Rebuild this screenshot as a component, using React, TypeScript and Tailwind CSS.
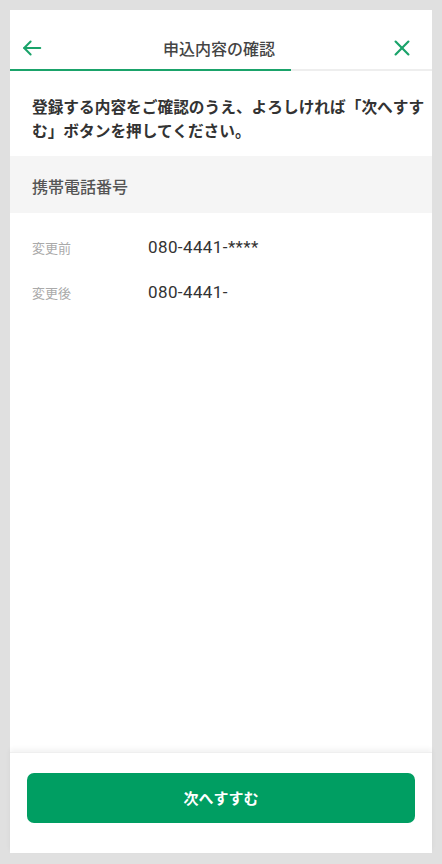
import React from "react";

export default function App() {
  const jp = { fontFamily: '"Noto Sans CJK JP", "Noto Sans", sans-serif' };
  return (
    <div className="w-[442px] h-[864px] bg-[#e0e0e0] pt-[10px] px-[10px] pb-[11px]" style={jp}>
      <div className="w-[422px] h-[843px] bg-white flex flex-col">
        {/* header */}
        <div className="h-[59px] pt-[16px] flex items-center justify-between pl-[11px] pr-[19px]">
          <svg width="22" height="22" viewBox="0 0 24 24" fill="none" stroke="#1aa36a" strokeWidth="2.2" strokeLinecap="round" strokeLinejoin="round">
            <path d="M21 12H3.5" />
            <path d="M10.5 5l-7 7 7 7" />
          </svg>
          <div className="text-[16px] font-medium text-[#444] leading-none pl-[4px]">申込内容の確認</div>
          <svg width="22" height="22" viewBox="0 0 24 24" fill="none" stroke="#1aa36a" strokeWidth="2.4" strokeLinecap="round">
            <path d="M5 5l14 14" />
            <path d="M19 5L5 19" />
          </svg>
        </div>
        <div className="h-[2px] bg-[#eeeeee] flex">
          <div className="w-[281px] h-[2px] bg-[#1aa36a]" />
        </div>
        {/* message */}
        <div className="pl-[22px] pr-[6px] pt-[24px] pb-[13px]">
          <p className="text-[15.7px] font-bold text-[#333] leading-[24px]">
            登録する内容をご確認のうえ、よろしければ「次へすすむ」ボタンを押してください。
          </p>
        </div>
        {/* section */}
        <div className="h-[57px] bg-[#f5f5f5] flex items-center px-[22px]">
          <span className="text-[16px] font-medium text-[#555] leading-none pt-[2px]">携帯電話番号</span>
        </div>
        <div className="pt-[12px] px-[22px]">
          <div className="h-[45px] flex items-center">
            <span className="w-[116px] text-[13px] text-[#aaa]">変更前</span>
            <span className="text-[17px] text-[#333] tracking-[0.4px]" style={{ fontFamily: 'Roboto, "Noto Sans", sans-serif' }}>080-4441-****</span>
          </div>
          <div className="h-[45px] flex items-center">
            <span className="w-[116px] text-[13px] text-[#aaa]">変更後</span>
            <span className="text-[17px] text-[#333] tracking-[0.4px]" style={{ fontFamily: 'Roboto, "Noto Sans", sans-serif' }}>080-4441-</span>
          </div>
        </div>
        <div className="flex-1" />
        {/* footer */}
        <div className="h-[101px] pt-[20px] px-[17px] shadow-[0_-3px_5px_rgba(0,0,0,0.05)] border-t border-[#efefef]">
          <button className="w-full h-[50px] rounded-[7px] bg-[#009e62] text-white text-[15px] font-bold flex items-center justify-center">
            次へすすむ
          </button>
        </div>
      </div>
    </div>
  );
}
